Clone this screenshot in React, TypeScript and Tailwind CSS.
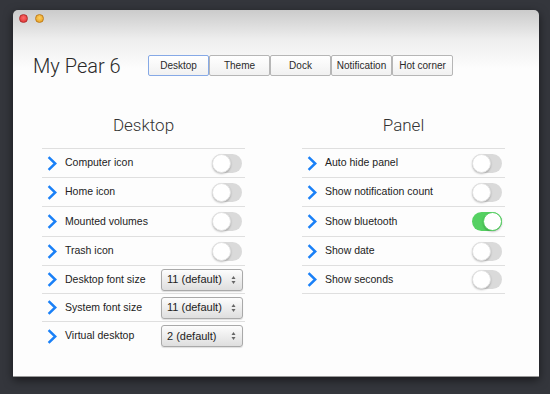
import React from "react";

const Chevron = () => (
  <svg width="10" height="15" viewBox="0 0 10 15" className="shrink-0">
    <path d="M1.6 1.2 L8.2 7.5 L1.6 13.8" fill="none" stroke="#1a80f7" strokeWidth="2.5" strokeLinecap="butt" strokeLinejoin="miter" />
  </svg>
);

const Toggle = ({ on }: { on?: boolean }) =>
  on ? (
    <div className="w-[30px] h-[19px] rounded-full bg-[#55d162] relative shrink-0">
      <div className="absolute right-0 top-0 w-[19px] h-[19px] rounded-full bg-white border border-[#55d162] shadow-[0_1px_2px_rgba(0,0,0,0.25)]" />
    </div>
  ) : (
    <div className="w-[30px] h-[19px] rounded-full bg-[#dadada] relative shrink-0">
      <div className="absolute left-0 top-0 w-[19px] h-[19px] rounded-full bg-white border border-[#e4e4e4] shadow-[0_1px_2px_rgba(0,0,0,0.25)]" />
    </div>
  );

const Select = ({ value }: { value: string }) => (
  <div className="w-[82px] h-[22px] rounded-[3px] border border-[#a9a9a9] bg-gradient-to-b from-[#fdfdfd] to-[#dedede] flex items-center justify-between pl-[5px] pr-[6px] shrink-0 shadow-[0_1px_1px_rgba(0,0,0,0.12)]">
    <span className="text-[11px] text-[#222]">{value}</span>
    <svg width="5" height="10" viewBox="0 0 5 10">
      <path d="M2.5 1 L4.5 4 L0.5 4 Z" fill="#666" />
      <path d="M2.5 9 L4.5 6 L0.5 6 Z" fill="#666" />
    </svg>
  </div>
);

type Row = { label: string; h: string; on?: boolean; select?: string };

const RowView = ({ r, last, bottom }: { r: Row; last?: boolean; bottom?: boolean }) => (
  <div
    className={
      "flex items-center border-t border-[#dfdfdf] " +
      r.h +
      (last && bottom ? " border-b" : "")
    }
  >
    <div className="w-[5px]" />
    <Chevron />
    <span className="ml-[8px] text-[10.5px] text-[#222] flex-1">{r.label}</span>
    {r.select ? <Select value={r.select} /> : <Toggle on={r.on} />}
    <div className={r.select ? "w-[2px]" : "w-[3px]"} />
  </div>
);

const leftRows: Row[] = [
  { label: "Computer icon", h: "h-[29px]" },
  { label: "Home icon", h: "h-[29px]" },
  { label: "Mounted volumes", h: "h-[30px]" },
  { label: "Trash icon", h: "h-[29px]" },
  { label: "Desktop font size", h: "h-[28px]", select: "11 (default)" },
  { label: "System font size", h: "h-[28px]", select: "11 (default)" },
  { label: "Virtual desktop", h: "h-[29px]", select: "2 (default)" },
];

const rightRows: Row[] = [
  { label: "Auto hide panel", h: "h-[29px]" },
  { label: "Show notification count", h: "h-[29px]" },
  { label: "Show bluetooth", h: "h-[30px]", on: true },
  { label: "Show date", h: "h-[29px]" },
  { label: "Show seconds", h: "h-[29px]" },
];

const Column = ({ title, rows, bottom }: { title: string; rows: Row[]; bottom?: boolean }) => (
  <div className="w-[203px] flex flex-col">
    <div className="h-[20px] flex items-center justify-center text-[17px] font-light text-[#333] mb-[12px]" style={{ fontFamily: "Roboto, sans-serif" }}>
      {title}
    </div>
    {rows.map((r, i) => (
      <RowView key={r.label} r={r} last={i === rows.length - 1} bottom={bottom} />
    ))}
  </div>
);

const tabs = ["Desktop", "Theme", "Dock", "Notification", "Hot corner"];

export default function App() {
  return (
    <div
      className="w-[550px] h-[394px] bg-[#34363c] pt-[10px] pl-[13px] overflow-hidden"
      style={{ fontFamily: '"Liberation Sans", Arial, sans-serif' }}
    >
      <div className="w-[526px] h-[367px] rounded-t-[5px] bg-gradient-to-b from-[#cbcbcb] via-[#eeeeee] via-[8%] to-[#fdfdfd] to-[16%] border-b border-[#9a9a9a] shadow-[0_3px_10px_rgba(0,0,0,0.55)] flex flex-col">
        <div className="flex pt-[4px] pl-[6px] gap-[7px]">
          <div className="w-[9px] h-[9px] rounded-full bg-[radial-gradient(circle_at_50%_40%,#ff6b6b,#d92a2a)] border border-[#b23030]" />
          <div className="w-[9px] h-[9px] rounded-full bg-[radial-gradient(circle_at_50%_40%,#ffd060,#e39a1c)] border border-[#c07d1a]" />
        </div>
        <div className="flex items-center mt-[32px] h-[21px]">
          <div className="pl-[20px] w-[135px] text-[20px] font-light text-[#2a2a2a] leading-none" style={{ fontFamily: "Roboto, sans-serif" }}>
            My Pear 6
          </div>
          <div className="flex">
            {tabs.map((t, i) => (
              <div
                key={t}
                className={
                  "w-[61px] h-[21px] flex items-center justify-center text-[10px] text-[#2a2a2a] rounded-[2px] border bg-gradient-to-b from-white to-[#f1f1f1] " +
                  (i === 0 ? "border-[#86a9e6]" : "border-[#b6b6b6]")
                }
              >
                {t}
              </div>
            ))}
          </div>
        </div>
        <div className="flex pl-[29px] gap-[57px] mt-[40px]">
          <Column title="Desktop" rows={leftRows} />
          <Column title="Panel" rows={rightRows} bottom />
        </div>
      </div>
    </div>
  );
}
